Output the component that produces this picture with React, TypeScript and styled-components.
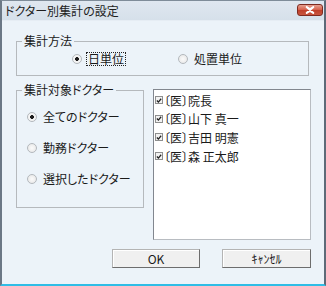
import styled, { createGlobalStyle } from "styled-components";

const GlobalStyle = createGlobalStyle`
  html, body {
    margin: 0;
    padding: 0;
    background: #ecf3f9;
  }
  body {
    font-family: "Noto Sans CJK JP", "Noto Sans", sans-serif;
    font-size: 12px;
    font-feature-settings: "palt";
    color: #1a1a1a;
  }
`;

const doctors = ["〔医〕院長", "〔医〕山下 真一", "〔医〕吉田 明憲", "〔医〕森 正太郎"];

const targets = [
  { label: "全てのドクター", checked: true },
  { label: "勤務ドクター", checked: false },
  { label: "選択したドクター", checked: false },
];

const RadioOption = ({
  label,
  checked,
  focused,
}: {
  label: string;
  checked?: boolean;
  focused?: boolean;
}) => (
  <Option>
    <RadioCircle $checked={checked} />
    <OptionText $focused={focused}>{label}</OptionText>
  </Option>
);

const App = () => {
  return (
    <>
      <GlobalStyle />
      <Window>
        <TitleBar>
          <Title>ドクター別集計の設定</Title>
          <CloseButton>
            <svg width="10" height="8" viewBox="0 0 10 8">
              <path
                d="M1 0.5 L5 3 L9 0.5 M1 7.5 L5 5 L9 7.5 M1.5 1 L8.5 7 M8.5 1 L1.5 7"
                stroke="#fff"
                strokeWidth="1.8"
                fill="none"
              />
            </svg>
          </CloseButton>
        </TitleBar>
        <Client>
          <MethodGroup>
            <Legend>集計方法</Legend>
            <MethodRow>
              <RadioOption label="日単位" checked focused />
              <RadioOption label="処置単位" />
            </MethodRow>
          </MethodGroup>
          <MiddleRow>
            <TargetGroup>
              <Legend>集計対象ドクター</Legend>
              <TargetColumn>
                {targets.map((t) => (
                  <RadioOption key={t.label} label={t.label} checked={t.checked} />
                ))}
              </TargetColumn>
            </TargetGroup>
            <DoctorList>
              {doctors.map((name) => (
                <DoctorItem key={name}>
                  <CheckBox>
                    <svg width="7" height="7" viewBox="0 0 7 7">
                      <path d="M1 3.5 L2.8 5.3 L6 1.5" stroke="#222" strokeWidth="1.5" fill="none" />
                    </svg>
                  </CheckBox>
                  <span>{name}</span>
                </DoctorItem>
              ))}
            </DoctorList>
          </MiddleRow>
          <ButtonRow>
            <Button $width={88}>OK</Button>
            <Button $width={89}>ｷｬﾝｾﾙ</Button>
          </ButtonRow>
        </Client>
      </Window>
    </>
  );
};

const Window = styled.div`
  width: 326px;
  height: 286px;
  box-sizing: border-box;
  display: flex;
  flex-direction: column;
  border-top: 1px solid #7f8c99;
  border-left: 2px solid #6b7886;
  border-right: 2px solid #5d6a78;
  border-bottom: 2px solid #2fbde6;
  background: #ecf3f9;
`;

const TitleBar = styled.div`
  height: 19px;
  display: flex;
  align-items: center;
  justify-content: space-between;
  padding-left: 3px;
  background: linear-gradient(#dfe7f0, #d6e0ea);
  border-bottom: 1px solid #e6edf4;
`;

const Title = styled.span`
  font-size: 12px;
  line-height: 14px;
  color: #1e1e1e;
`;

const CloseButton = styled.div`
  width: 26px;
  height: 12px;
  box-sizing: border-box;
  margin-right: 1px;
  margin-top: -1px;
  display: flex;
  align-items: center;
  justify-content: center;
  border: 1px solid #7e2a20;
  border-radius: 3px;
  background: linear-gradient(#e6a190 0%, #d8644f 45%, #c0402c 55%, #c8553e 100%);
`;

const Client = styled.div`
  flex: 1;
  display: flex;
  flex-direction: column;
  padding: 13px 13px 0 14px;
`;

const Group = styled.fieldset`
  margin: 0;
  padding: 0;
  min-inline-size: 0;
  box-sizing: border-box;
  border: 1px solid #b5b9bd;
`;

const MethodGroup = styled(Group)`
  width: 293px;
  height: 42px;
`;

const TargetGroup = styled(Group)`
  width: 128px;
  height: 125px;
  flex: none;
`;

const Legend = styled.legend`
  margin-left: 5px;
  padding: 0 2px;
  font-size: 12px;
  line-height: 14px;
  color: #1a1a1a;
`;

const MethodRow = styled.div`
  display: flex;
  gap: 52px;
  padding: 4px 0 0 55px;
`;

const TargetColumn = styled.div`
  display: flex;
  flex-direction: column;
  gap: 17px;
  padding: 13px 0 0 10px;
`;

const Option = styled.label`
  display: flex;
  align-items: center;
  gap: 4px;
  height: 14px;
`;

const RadioCircle = styled.span<{ $checked?: boolean }>`
  width: 10px;
  height: 10px;
  box-sizing: border-box;
  border-radius: 50%;
  border: 1px solid #b3b8bd;
  background: ${(p) =>
    p.$checked
      ? "radial-gradient(circle, #1c1c1c 0 1.6px, #f4f4f4 2.2px)"
      : "radial-gradient(circle, #fbfbfb, #e4e4e4)"};
  flex: none;
`;

const OptionText = styled.span<{ $focused?: boolean }>`
  padding: 0 1px;
  line-height: 12px;
  border: 1px dotted ${(p) => (p.$focused ? "#222" : "transparent")};
  white-space: nowrap;
`;

const MiddleRow = styled.div`
  display: flex;
  align-items: flex-start;
  gap: 9px;
  margin-top: 7px;
`;

const DoctorList = styled.div`
  width: 158px;
  height: 151px;
  margin-top: 6px;
  box-sizing: border-box;
  padding: 1px 0 0 1px;
  background: #fff;
  border: 1px solid #82878f;
  border-right-color: #b8bcc1;
  border-bottom-color: #b8bcc1;
`;

const DoctorItem = styled.div`
  display: flex;
  align-items: center;
  gap: 1px;
  height: 18.6px;
  white-space: nowrap;
`;

const CheckBox = styled.span`
  width: 8px;
  height: 8px;
  box-sizing: border-box;
  display: flex;
  align-items: center;
  justify-content: center;
  border: 1px solid #8e8f8f;
  background: #f2f2f2;
  flex: none;
`;

const ButtonRow = styled.div`
  display: flex;
  justify-content: flex-end;
  gap: 22px;
  margin-top: 9px;
`;

const Button = styled.div<{ $width: number }>`
  width: ${(p) => p.$width}px;
  height: 19px;
  box-sizing: border-box;
  display: flex;
  align-items: center;
  justify-content: center;
  font-size: 12px;
  color: #1a1a1a;
  background: #f0f0f0;
  border: 1px solid #b4b4b4;
  border-right-color: #6d6d6d;
  border-bottom-color: #6d6d6d;
  box-shadow: inset 1px 1px 0 #ffffff;
`;

export default App;
